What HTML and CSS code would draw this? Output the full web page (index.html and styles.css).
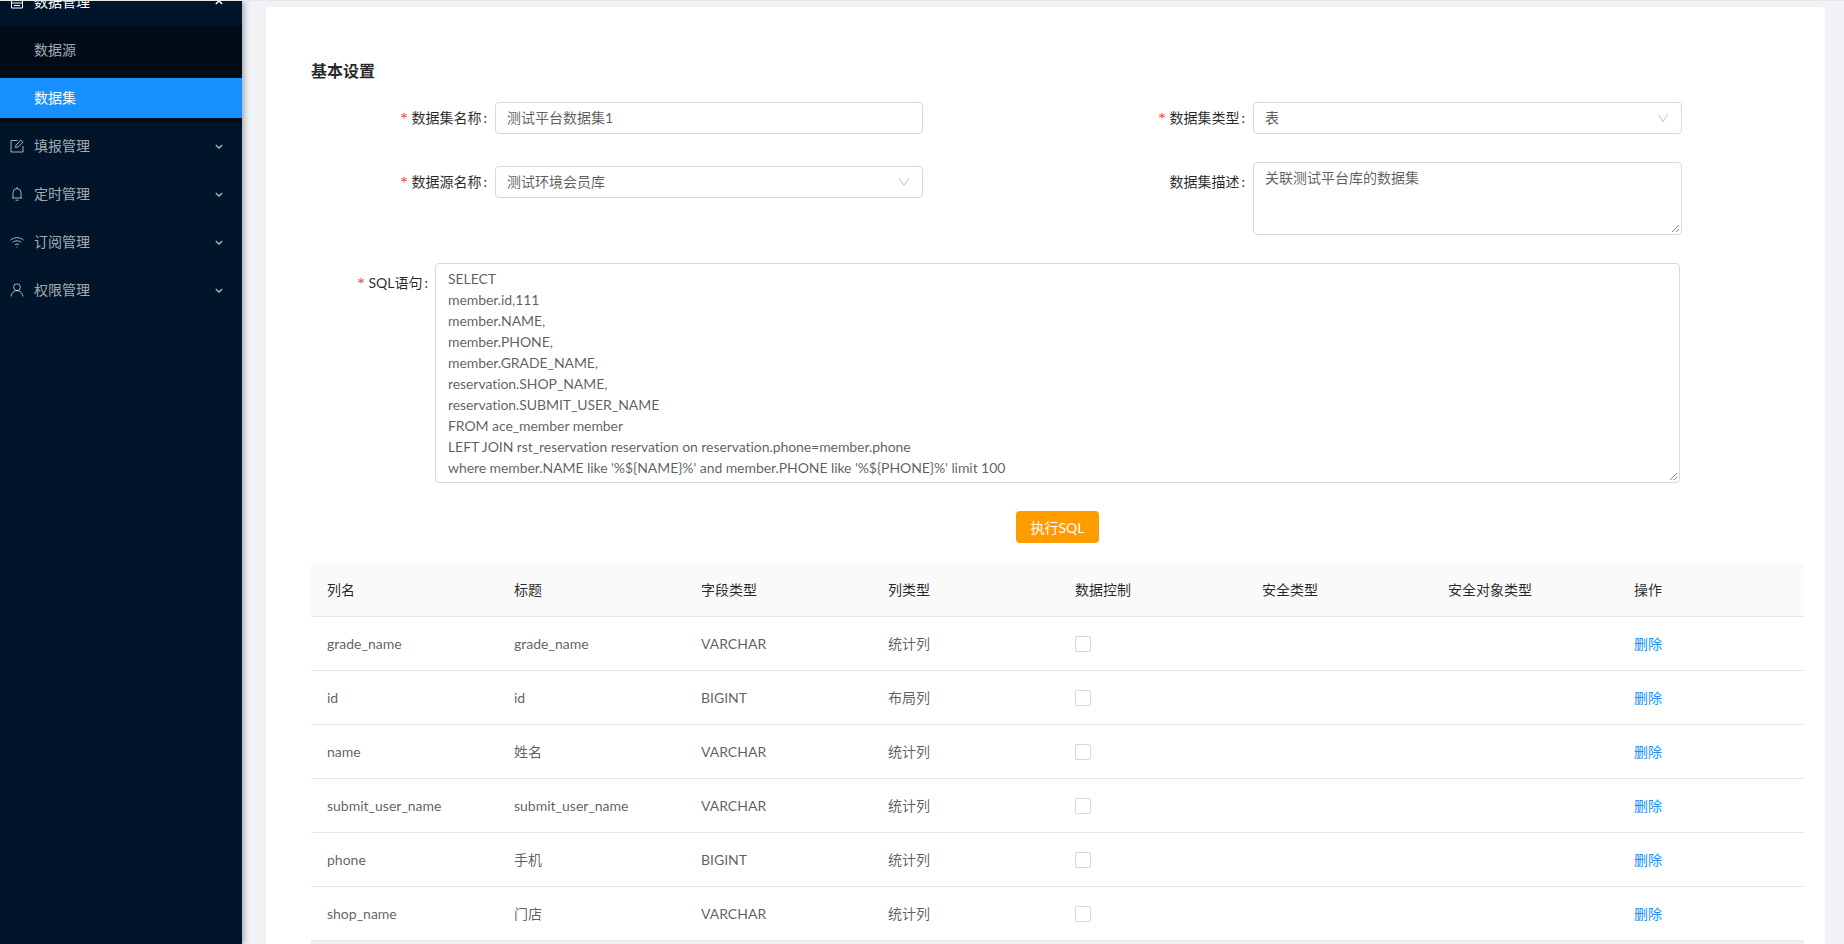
FILE: index.html
```html
<!DOCTYPE html>
<html lang="zh-CN">
<head>
<meta charset="utf-8">
<title>数据集</title>
<link rel="stylesheet" href="styles.css">
</head>
<body>
<div class="topline"></div>
<div class="app">
  <aside class="sider">
    <div class="menu-head">
      <svg class="ico" viewBox="0 0 14 14"><path d="M1.500 1h11v12h-11zM1.500 8h11M4 10.500h6"/></svg>
      <span class="menu-text">数据管理</span>
      <svg class="arrow up" viewBox="0 0 10 6"><path d="M1 1l4 4 4-4"/></svg>
    </div>
    <div class="submenu">
      <div class="sub-item">数据源</div>
      <div class="sub-item active">数据集</div>
    </div>
    <div class="menu-item">
      <svg class="ico" viewBox="0 0 14 14"><path d="M7.500 1.500H1v11.500h12V7M5.500 8.500l.5-2.500L11 1.200l2 2L8 8z"/></svg>
      <span class="menu-text">填报管理</span>
      <svg class="arrow" viewBox="0 0 10 6"><path d="M1 1l4 4 4-4"/></svg>
    </div>
    <div class="menu-item">
      <svg class="ico" viewBox="0 0 14 14"><path d="M7 0v1.600M3 10.800V5.600a4 4 0 0 1 8 0v5.200M1.800 11h10.400M5.500 13.200h3"/></svg>
      <span class="menu-text">定时管理</span>
      <svg class="arrow" viewBox="0 0 10 6"><path d="M1 1l4 4 4-4"/></svg>
    </div>
    <div class="menu-item">
      <svg class="ico" viewBox="0 0 14 14"><path d="M.5 5.200C4.200 1.800 9.800 1.800 13.500 5.200M2.600 7.500c2.600-2.200 6.200-2.200 8.800 0M4.900 9.800c1.300-1 2.900-1 4.200 0M7 11.500v1"/></svg>
      <span class="menu-text">订阅管理</span>
      <svg class="arrow" viewBox="0 0 10 6"><path d="M1 1l4 4 4-4"/></svg>
    </div>
    <div class="menu-item">
      <svg class="ico" viewBox="0 0 14 14"><circle cx="7" cy="4.200" r="3.400"/><path d="M1 13.500c.4-3.300 2.800-5.900 6-5.900s5.600 2.600 6 5.900"/></svg>
      <span class="menu-text">权限管理</span>
      <svg class="arrow" viewBox="0 0 10 6"><path d="M1 1l4 4 4-4"/></svg>
    </div>
  </aside>
  <main class="content">
    <section class="card">
      <h2 class="title">基本设置</h2>
      <div class="form-grid">
        <div class="col">
          <div class="field">
            <label class="label req">数据集名称<span class="colon">:</span></label>
            <div class="control">测试平台数据集1</div>
          </div>
          <div class="field">
            <label class="label req">数据源名称<span class="colon">:</span></label>
            <div class="control select">测试环境会员库<svg class="chev" viewBox="0 0 10 8"><path d="M.5.5L5 7.500 9.500.5"/></svg></div>
          </div>
        </div>
        <div class="col tight">
          <div class="field">
            <label class="label req">数据集类型<span class="colon">:</span></label>
            <div class="control select">表<svg class="chev" viewBox="0 0 10 8"><path d="M.5.5L5 7.500 9.500.5"/></svg></div>
          </div>
          <div class="field">
            <label class="label label-low">数据集描述<span class="colon">:</span></label>
            <div class="control area">关联测试平台库的数据集<svg class="grip" viewBox="0 0 9 9"><path d="M1 8l7-7M5 8l3-3"/></svg></div>
          </div>
        </div>
      </div>
      <div class="sql-row">
        <label class="label req sql-label">SQL语句<span class="colon">:</span></label>
        <div class="control sql">SELECT
member.id,111
member.NAME,
member.PHONE,
member.GRADE_NAME,
reservation.SHOP_NAME,
reservation.SUBMIT_USER_NAME
FROM ace_member member
LEFT JOIN rst_reservation reservation on reservation.phone=member.phone
where member.NAME like '%${NAME}%' and member.PHONE like '%${PHONE}%' limit 100<svg class="grip" viewBox="0 0 9 9"><path d="M1 8l7-7M5 8l3-3"/></svg></div>
      </div>
      <div class="run"><button class="btn">执行SQL</button></div>
      <table class="table">
        <thead>
          <tr><th>列名</th><th>标题</th><th>字段类型</th><th>列类型</th><th>数据控制</th><th>安全类型</th><th>安全对象类型</th><th>操作</th></tr>
        </thead>
        <tbody>
          <tr><td>grade_name</td><td>grade_name</td><td>VARCHAR</td><td>统计列</td><td><span class="check"></span></td><td></td><td></td><td><a class="link">删除</a></td></tr>
          <tr><td>id</td><td>id</td><td>BIGINT</td><td>布局列</td><td><span class="check"></span></td><td></td><td></td><td><a class="link">删除</a></td></tr>
          <tr><td>name</td><td>姓名</td><td>VARCHAR</td><td>统计列</td><td><span class="check"></span></td><td></td><td></td><td><a class="link">删除</a></td></tr>
          <tr><td>submit_user_name</td><td>submit_user_name</td><td>VARCHAR</td><td>统计列</td><td><span class="check"></span></td><td></td><td></td><td><a class="link">删除</a></td></tr>
          <tr><td>phone</td><td>手机</td><td>BIGINT</td><td>统计列</td><td><span class="check"></span></td><td></td><td></td><td><a class="link">删除</a></td></tr>
          <tr><td>shop_name</td><td>门店</td><td>VARCHAR</td><td>统计列</td><td><span class="check"></span></td><td></td><td></td><td><a class="link">删除</a></td></tr>
        </tbody>
      </table>
      <div class="table-foot"></div>
    </section>
  </main>
</div>
</body>
</html>
```

FILE: styles.css
```css
* { box-sizing: border-box; }
html, body { margin: 0; height: 100%; overflow: hidden; }
body {
  font-family: Lato, "Noto Sans CJK SC", sans-serif;
  font-size: 14px;
  line-height: 21px;
  color: rgba(0, 0, 0, .65);
  background: #f0f2f5;
}
.topline { height: 1px; background: #e8e8e8; }
.app { display: flex; height: 943px; overflow: hidden; }
.sider {
  width: 242px;
  flex: none;
  background: #001529;
  box-shadow: 2px 0 6px rgba(0, 21, 41, .35);
  color: rgba(255, 255, 255, .65);
  position: relative;
  z-index: 1;
  overflow: hidden;
}
.menu-head { display: flex; align-items: center; height: 48px; margin-top: -23px; padding: 0 19px 0 10px; color: #fff; }
.menu-item { display: flex; align-items: center; height: 40px; margin-bottom: 8px; padding: 0 19px 0 10px; }
.ico { width: 14px; height: 14px; margin-right: 10px; fill: none; stroke: currentColor; stroke-width: 1; flex: none; }
.menu-text { flex: 1; line-height: 20px; }
.arrow { width: 8px; height: 5px; fill: none; stroke: currentColor; stroke-width: 1.8; flex: none; }
.arrow.up { transform: rotate(180deg); }
.submenu { background: #000c17; height: 96px; padding-top: 4px; margin-bottom: 4px; }
.sub-item { height: 40px; line-height: 40px; padding-left: 34px; margin-bottom: 8px; }
.sub-item.active { background: #1890ff; color: #fff; }
.content { flex: 1; min-width: 0; padding: 6px 19px 0 24px; }
.card { background: #fff; border-radius: 4px; padding: 52px 21px 0 45px; height: 1000px; }
.title { margin: 0 0 19px; font-size: 16px; line-height: 24px; font-weight: 600; color: rgba(0, 0, 0, .85); }
.form-grid { display: flex; gap: 330px; margin-left: 184px; width: 1187px; }
.col { display: flex; flex-direction: column; gap: 32px; width: 428px; }
.col.tight { gap: 28px; width: 429px; }
.field { display: flex; align-items: flex-start; position: relative; }
.label { color: rgba(0, 0, 0, .85); white-space: nowrap; }
.colon { margin-left: 2px; }
.field .label { position: absolute; right: 100%; margin-right: 8px; top: 5px; }
.field .label-low { top: 9px; }
.req::before { content: "*"; color: #f5222d; margin-right: 4px; font-family: "Liberation Serif", serif; }
.control {
  position: relative;
  width: 100%;
  height: 32px;
  border: 1px solid #d9d9d9;
  border-radius: 4px;
  padding: 4px 11px;
  background: #fff;
}
.select { padding-right: 30px; }
.chev { position: absolute; right: 13px; top: 11px; width: 10px; height: 8px; fill: none; stroke: #bfbfbf; stroke-width: 1; }
.area { height: 73px; }
.grip { position: absolute; right: 1px; bottom: 1px; width: 9px; height: 9px; fill: none; stroke: #666; stroke-width: .8; }
.sql-row { margin-top: 28px; padding-left: 124px; position: relative; }
.sql-label { position: absolute; right: calc(100% - 117px); top: 9px; }
.sql { height: 220px; white-space: pre; width: 1245px; padding-left: 12px; letter-spacing: -.07px; }
.run { display: flex; justify-content: center; margin-top: 28px; }
.btn {
  width: 83px;
  height: 32px;
  border: 0;
  border-radius: 4px;
  background: #ff9d00;
  color: #fff;
  font: inherit;
  padding: 0;
}
.table { width: 1493px; margin-top: 20px; border-collapse: separate; border-spacing: 0; table-layout: fixed; }
.table th, .table td { height: 54px; padding: 0 16px; text-align: left; border-bottom: 1px solid #e8e8e8; font-weight: 400; }
.table th { width: 187px; background: #fafafa; color: rgba(0, 0, 0, .85); }
.table th:nth-child(n+6) { width: 186px; }
.table th:first-child { border-top-left-radius: 4px; }
.table th:last-child { border-top-right-radius: 4px; }
.check { display: block; width: 16px; height: 16px; border: 1px solid #d9d9d9; border-radius: 2px; background: #fff; }
.link { color: #1890ff; }
.table-foot { width: 1493px; height: 4px; background: #f0f0f0; }
```
